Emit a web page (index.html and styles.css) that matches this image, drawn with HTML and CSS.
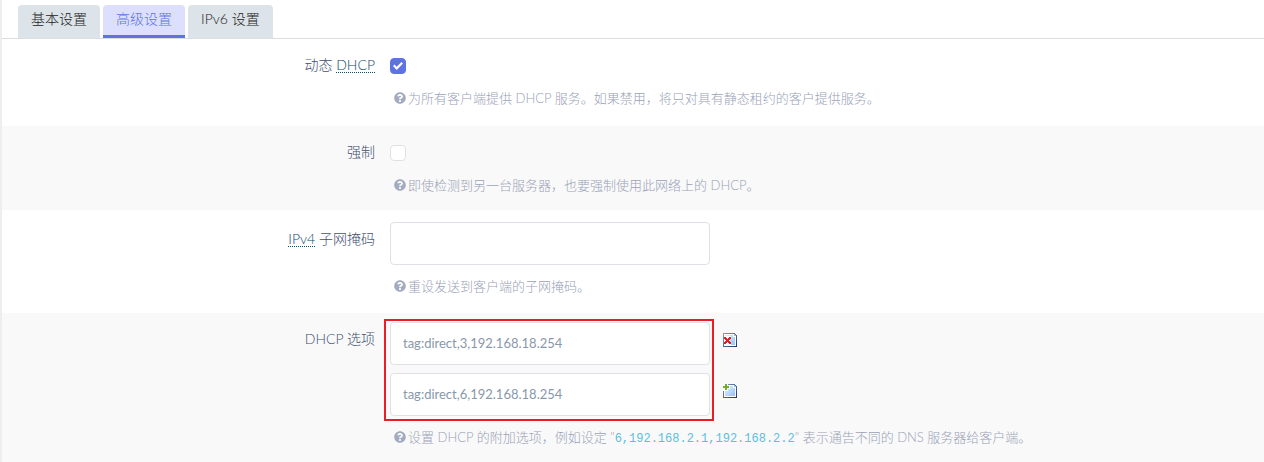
FILE: index.html
```html
<!DOCTYPE html>
<html lang="zh-CN">
<head>
    <meta charset="UTF-8">
    <meta name="viewport" content="width=device-width, initial-scale=1.0">
    <title>DHCP 服务器</title>
    <link rel="stylesheet" href="styles.css">
</head>
<body>
    <svg class="sprite" aria-hidden="true">
        <linearGradient id="paper" x1="0" y1="0" x2="1" y2="1">
            <stop offset="0" stop-color="#e4f1fe"/>
            <stop offset="1" stop-color="#8fc4fb"/>
        </linearGradient>
        <linearGradient id="paper-edge" x1="0" y1="0" x2="1" y2="1">
            <stop offset="0" stop-color="#7ba3cf"/>
            <stop offset="1" stop-color="#1f3557"/>
        </linearGradient>
        <symbol id="icon-help" viewBox="0 0 512 512">
            <path fill="currentColor" d="M504 256c0 137-111 248-248 248S8 393 8 256 119 8 256 8s248 111 248 248zM262.700 90c-54.500 0-89.200 23-116.500 63.800-3.500 5.300-2.400 12.400 2.700 16.300l34.700 26.300c5.200 3.900 12.600 3 16.700-2.100 17.900-22.700 30.100-35.800 57.300-35.800 20.400 0 45.700 13.100 45.700 33 0 15-12.400 22.700-32.500 34C247 238.500 216 255 216 296v4c0 6.600 5.400 12 12 12h56c6.600 0 12-5.400 12-12v-1.300c0-28.800 84-30 84-107.700 0-58.500-60.700-101-117.300-101zM256 338c-25.400 0-46 20.600-46 46s20.600 46 46 46 46-20.600 46-46-20.600-46-46-46z"/>
        </symbol>
        <symbol id="icon-page" viewBox="0 0 14 14">
            <path fill="url(#paper-edge)" d="M0 0h12v1h1v1h1v12H0z"/>
            <path fill="#fff" d="M1 1h10v2h2v10H1z"/>
            <path fill="url(#paper)" d="M2 2h8v2h2v8H2z"/>
            <path fill="#8dbdf0" d="M11 1h1v1h1v1h-2z"/>
        </symbol>
    </svg>

    <div class="page">
        <nav class="tabs">
            <a class="tab" href="#general">基本设置</a>
            <a class="tab active" href="#advanced">高级设置</a>
            <a class="tab" href="#ipv6">IPv6 设置</a>
        </nav>

        <form class="section">
            <div class="row row-first">
                <label class="title" for="dynamic">动态 <abbr title="Dynamic Host Configuration Protocol">DHCP</abbr></label>
                <div class="field">
                    <div class="check"><input type="checkbox" id="dynamic" checked></div>
                    <p class="help"><svg class="help-icon"><use href="#icon-help"/></svg>为所有客户端提供 DHCP 服务。如果禁用，将只对具有静态租约的客户提供服务。</p>
                </div>
            </div>

            <div class="row">
                <label class="title" for="force">强制</label>
                <div class="field">
                    <div class="check"><input type="checkbox" id="force"></div>
                    <p class="help"><svg class="help-icon"><use href="#icon-help"/></svg>即使检测到另一台服务器，也要强制使用此网络上的 DHCP。</p>
                </div>
            </div>

            <div class="row row-mask">
                <label class="title" for="netmask"><abbr title="Internet Protocol Version 4">IPv4</abbr> 子网掩码</label>
                <div class="field">
                    <input class="text" type="text" id="netmask">
                    <p class="help"><svg class="help-icon"><use href="#icon-help"/></svg>重设发送到客户端的子网掩码。</p>
                </div>
            </div>

            <div class="row">
                <label class="title" for="option1">DHCP 选项</label>
                <div class="field">
                    <div class="options">
                        <div class="option">
                            <input class="text" type="text" id="option1" value="tag:direct,3,192.168.18.254">
                            <button class="icon-button" type="button" aria-label="删除">
                                <svg viewBox="0 0 14 14" shape-rendering="crispEdges">
                                    <use href="#icon-page"/>
                                    <path fill="#fff" d="M1 3h7v3H7v3h1v3H1z"/>
                                    <path fill="#de1f26" d="M1 4h2v1h1v1h1V5h1V4h2v2H7v1H6v1h1v1h1v2H6v-1H5V9H4v1H3v1H1V9h1V8h1V7H2V6H1z"/>
                                </svg>
                            </button>
                        </div>
                        <div class="option">
                            <input class="text" type="text" aria-label="DHCP 选项 2" value="tag:direct,6,192.168.18.254">
                            <button class="icon-button" type="button" aria-label="添加">
                                <svg viewBox="0 0 14 14" shape-rendering="crispEdges">
                                    <use href="#icon-page"/>
                                    <path fill="#fff" d="M0 0h5v1h2v4H5v2H0z"/>
                                    <path fill="#72ad2b" d="M2 0h2v2h2v2H4v2H2V4H0V2h2z"/>
                                </svg>
                            </button>
                        </div>
                    </div>
                    <p class="help"><svg class="help-icon"><use href="#icon-help"/></svg>设置 DHCP 的附加选项，例如设定 "<code>6,192.168.2.1,192.168.2.2</code>" 表示通告不同的 DNS 服务器给客户端。</p>
                </div>
            </div>
        </form>
    </div>
</body>
</html>
```
FILE: styles.css
```css
*,
*::before,
*::after {
    box-sizing: border-box;
}

body {
    margin: 0;
    background-color: #fff;
    font-family: Lato, "Noto Sans CJK SC", sans-serif;
    font-size: 14px;
    color: #42506f;
}

.sprite {
    position: absolute;
    width: 0;
    height: 0;
}

.page {
    min-height: 100vh;
    border-left: 2px solid #edeef2;
}

.tabs {
    display: flex;
    gap: 3px;
    padding: 5px 16px 0;
    border-bottom: 1px solid #ddd;
}

.tab {
    height: 33px;
    padding: 4px 13px 0;
    border-radius: 4px 4px 0 0;
    background-color: #dce3e9;
    color: #222;
    font-weight: 300;
    line-height: 20px;
    text-decoration: none;
}

.tab.active {
    border-bottom: 3px solid #5e72e4;
    background-color: #dce0fe;
    color: #5e72e4;
}

.row {
    display: grid;
    grid-template-columns: 373px 1fr;
    gap: 15px;
    padding: 9px 0 15px;
}

.row:nth-child(even) {
    background-color: #f9f9f9;
}

.row-first {
    padding-bottom: 18px;
}

.row-mask {
    padding: 12px 0 17px;
}

.title {
    font-weight: 300;
    line-height: 34px;
    text-align: right;
}

abbr {
    color: #0c4a68;
    text-decoration: underline dotted 1px;
    text-underline-offset: 2px;
}

.check {
    display: flex;
    align-items: center;
    height: 29px;
    padding-top: 7px;
}

.check input {
    appearance: none;
    display: flex;
    align-items: center;
    justify-content: center;
    width: 16px;
    height: 16px;
    margin: 0;
    border: 1px solid #dee2e6;
    border-radius: 4px;
    background-color: #fff;
}

.check input:checked {
    border-color: #5e72e4;
    background-color: #5e72e4;
}

.check input:checked::before {
    content: "";
    width: 10px;
    height: 8px;
    background-color: #fff;
    clip-path: polygon(0 50%, 15% 32%, 37% 58%, 85% 0, 100% 18%, 37% 100%);
}

.text {
    display: block;
    width: 320px;
    height: 43px;
    padding: 0 12px 2px;
    border: 1px solid #dee2e6;
    border-radius: 4px;
    background-color: #fff;
    color: #8898aa;
    font-family: inherit;
    font-size: 13px;
}

.options {
    position: relative;
    display: grid;
    gap: 8px;
}

/* red frame round the option inputs */
.options::after {
    content: "";
    position: absolute;
    top: -3px;
    bottom: -5px;
    left: -6px;
    width: 330px;
    border: 2px solid #ed1c24;
    pointer-events: none;
}

.option {
    display: flex;
    gap: 13px;
}

.icon-button {
    width: 14px;
    height: 14px;
    margin-top: 11px;
    padding: 0;
    border: none;
    background: none;
    cursor: pointer;
}

.icon-button svg {
    display: block;
}

.help {
    margin: 11px 0 0;
    padding-left: 4px;
    color: #9aa2b8;
    font-size: 13px;
    font-weight: 300;
    line-height: 20px;
}

.help-icon {
    width: 12px;
    height: 12px;
    margin-right: 2px;
    color: #a3abc0;
    vertical-align: -1px;
}

code {
    color: #5bc0de;
    font-family: "Liberation Mono", monospace;
    font-size: 12px;
}
```
